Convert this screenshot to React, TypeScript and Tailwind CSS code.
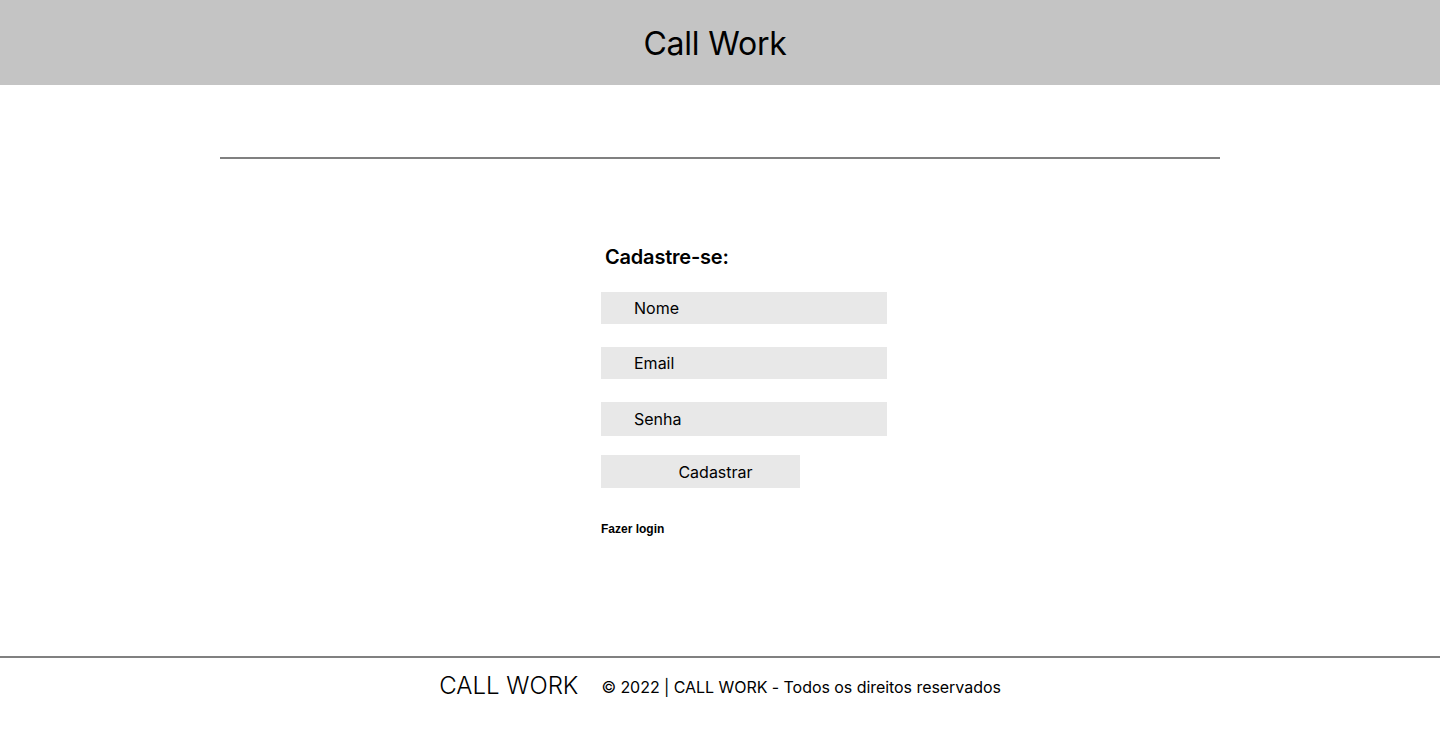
import React from "react";

export default function App() {
  return (
    <div className="min-h-[733px] flex flex-col bg-white text-black font-['Inter',sans-serif]">
      <header className="h-[85px] bg-[#c4c4c4] flex items-center justify-center">
        <h1 className="mr-[10px] text-[32px] font-normal pt-[2px] leading-none tracking-[-0.2px]">Call Work</h1>
      </header>

      <main className="flex-1 flex flex-col items-center">
        <hr className="mt-[72px] w-[1000px] border-0 h-[2px] bg-[#808080]" />

        <form className="mt-[88px] ml-[48px] w-[286px] flex flex-col">
          <h2 className="ml-[4px] text-[20px] font-semibold leading-none tracking-[-0.2px]">Cadastre-se:</h2>
          <input
            placeholder="Nome"
            className="mt-[25px] h-[32px] bg-[#e8e8e8] pl-[33px] text-[16px] outline-none placeholder:text-black"
          />
          <input
            placeholder="Email"
            className="mt-[23px] h-[32px] bg-[#e8e8e8] pl-[33px] text-[16px] outline-none placeholder:text-black"
          />
          <input
            placeholder="Senha"
            type="password"
            className="mt-[23px] h-[34px] bg-[#e8e8e8] pl-[33px] text-[16px] outline-none placeholder:text-black"
          />
          <button
            type="button"
            className="mt-[19px] w-[199px] h-[33px] bg-[#e8e8e8] text-[16px] pl-[30px]"
          >
            Cadastrar
          </button>
          <a className="mt-[32px] text-[12px] font-bold font-['Liberation_Sans',Arial,sans-serif]">
            Fazer login
          </a>
        </form>
      </main>

      <footer className="h-[77px] border-t-2 border-[#808080] flex items-start justify-center pt-[16px]">
        <span className="text-[24px] font-light leading-none">CALL WORK</span>
        <span className="ml-[23px] mt-[5px] text-[16px] leading-none tracking-[-0.05px]">
          © 2022 | CALL WORK - Todos os direitos reservados
        </span>
      </footer>
    </div>
  );
}
